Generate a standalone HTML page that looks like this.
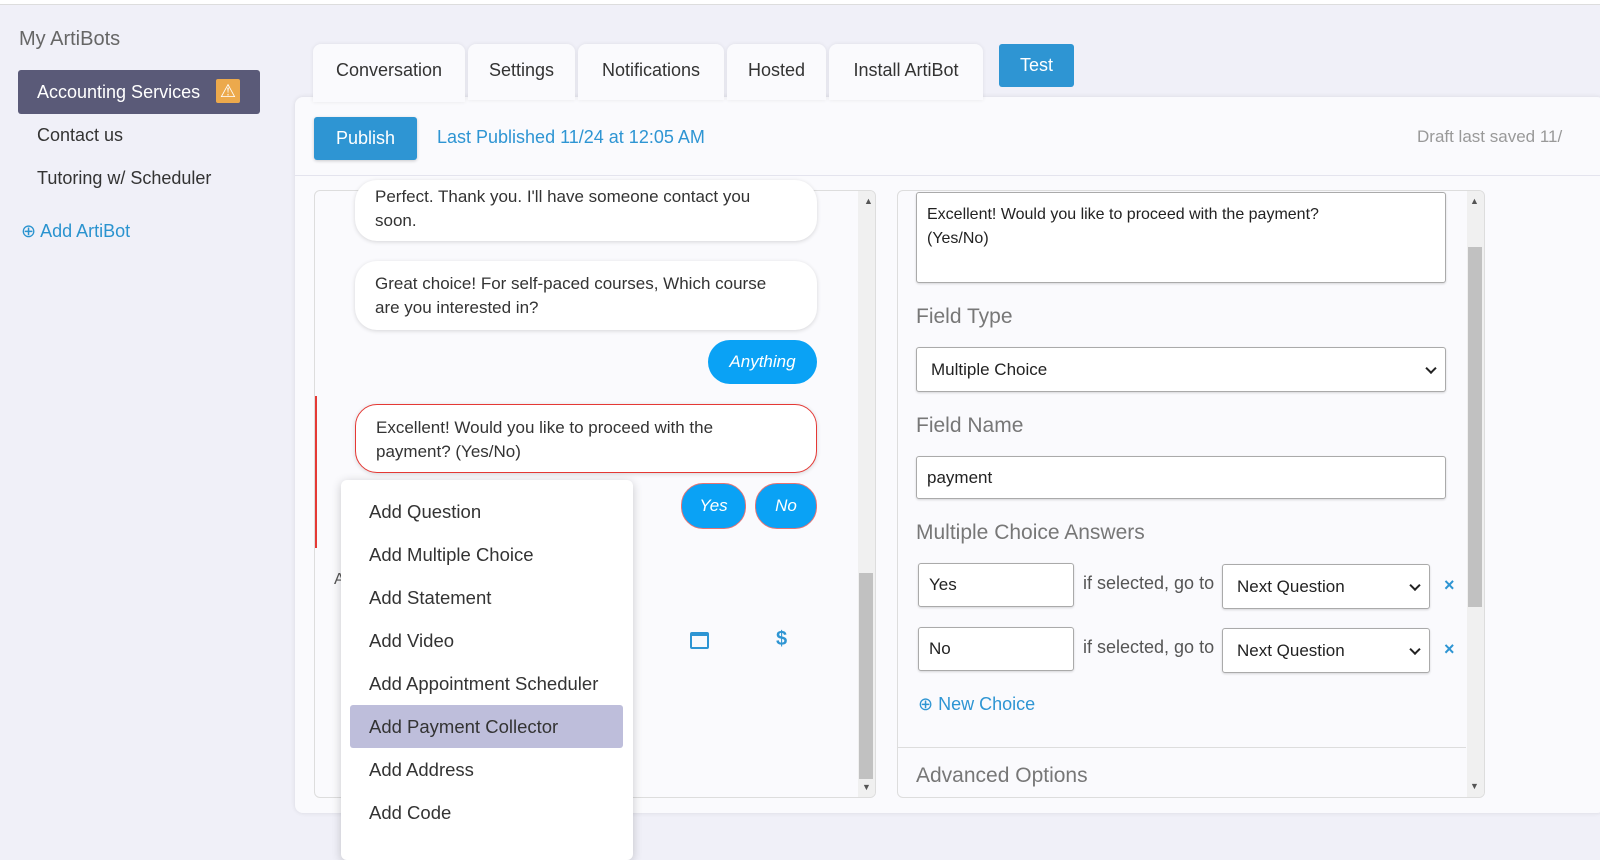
<!DOCTYPE html>
<html><head><meta charset="utf-8"><style>
*{box-sizing:border-box;margin:0;padding:0}
body{width:1600px;height:845px;overflow:hidden;background:#f0f0f8;font-family:"Liberation Sans",sans-serif;color:#333;position:relative;font-size:16px}
.a{position:absolute}
.tab{position:absolute;top:44px;height:56px;background:#fafafd;border-radius:8px 8px 0 0;box-shadow:0 0 4px rgba(0,0,0,.08);font-size:18px;color:#333;text-align:center;line-height:52px;white-space:nowrap}
.bub{position:absolute;background:#fff;border-radius:22px;box-shadow:0 1px 4px rgba(0,0,0,.15);font-size:17px;line-height:24px;color:#333;padding:0 37px 0 20px}
.pill{position:absolute;background:#0aa2f5;color:#fff;font-style:italic;font-size:17px;border-radius:22px;text-align:center;line-height:44px}
.inp{position:absolute;background:#fff;border:1px solid #aaa;border-radius:3px;box-shadow:0 1px 2px rgba(0,0,0,.15);font-size:17px;color:#222;padding-left:12px}
.lbl{position:absolute;font-size:21px;color:#777}
.mi{position:absolute;left:369px;font-size:18.5px;color:#333}
.chev{position:absolute;right:10px;top:50%;width:8px;height:8px;border-right:2px solid #222;border-bottom:2px solid #222;transform:translateY(-70%) rotate(45deg)}
</style></head><body>
<div class="a" style="left:0;top:0;width:1600px;height:5px;background:#fff;border-bottom:1px solid #ddd"></div>
<div class="a" style="left:19px;top:28px;font-size:20px;color:#666">My ArtiBots</div>
<div class="a" style="left:18px;top:70px;width:242px;height:44px;background:#5a5a78;border-radius:3px;color:#fff;font-size:18px;line-height:44px;padding-left:19px">Accounting Services
<span class="a" style="left:198px;top:9px;width:24px;height:24px;background:#eca94c;border-radius:2px;color:#fff;text-align:center;line-height:24px;font-size:18px">⚠</span></div>
<div class="a" style="left:37px;top:125px;font-size:18px">Contact us</div>
<div class="a" style="left:37px;top:168px;font-size:18px">Tutoring w/ Scheduler</div>
<div class="a" style="left:21px;top:221px;font-size:18px;color:#2a93cf">⊕ Add ArtiBot</div>

<div class="a" style="left:295px;top:97px;width:1310px;height:716px;background:#fafafd;border-radius:8px;box-shadow:0 0 5px rgba(0,0,0,.1)"></div>
<div class="tab" style="left:313px;width:152px;height:58px">Conversation</div>
<div class="tab" style="left:468px;width:107px">Settings</div>
<div class="tab" style="left:578px;width:146px">Notifications</div>
<div class="tab" style="left:727px;width:99px">Hosted</div>
<div class="tab" style="left:829px;width:154px">Install ArtiBot</div>
<div class="a" style="left:999px;top:44px;width:75px;height:43px;background:#2e95d3;border-radius:3px;color:#fff;font-size:18px;text-align:center;line-height:43px">Test</div>

<div class="a" style="left:314px;top:117px;width:103px;height:43px;background:#2e95d3;border-radius:3px;color:#fff;font-size:18px;text-align:center;line-height:43px;box-shadow:0 1px 3px rgba(0,0,0,.2)">Publish</div>
<div class="a" style="left:437px;top:127px;font-size:18px;color:#2e95d3">Last Published 11/24 at 12:05 AM</div>
<div class="a" style="left:1417px;top:127px;font-size:17px;color:#999;white-space:nowrap">Draft last saved 11/</div>
<div class="a" style="left:295px;top:175px;width:1305px;height:1px;background:#e4e4ee"></div>

<!-- left panel -->
<div class="a" style="left:314px;top:190px;width:562px;height:608px;background:#fafafd;border:1px solid #ddd;border-radius:6px;overflow:hidden">
 <div class="a" style="right:0;top:0;width:17px;height:608px;background:#f0f0f0"></div>
 <div class="a" style="right:2px;top:382px;width:14px;height:206px;background:#c1c1c1"></div>
 <div class="a" style="left:0;top:205px;width:2px;height:152px;background:#e53935"></div>
</div>
<div class="bub" style="left:355px;top:180px;width:462px;height:61px;padding-top:5px">Perfect. Thank you. I'll have someone contact you soon.</div>
<div class="bub" style="left:355px;top:261px;width:462px;height:69px;padding-top:11px">Great choice! For self-paced courses, Which course are you interested in?</div>
<div class="pill" style="left:708px;top:340px;width:109px">Anything</div>
<div class="bub" style="left:355px;top:404px;width:462px;height:69px;padding-top:11px;border:1.5px solid #e53935">Excellent! Would you like to proceed with the payment? (Yes/No)</div>
<div class="pill" style="left:681px;top:483px;width:65px;border:1.5px solid #e57373">Yes</div>
<div class="pill" style="left:755px;top:483px;width:62px;border:1.5px solid #e57373">No</div>
<div class="a" style="left:690px;top:632px;width:19px;height:17px;border:2px solid #2e95d3;border-top-width:4px;border-radius:2px"></div>
<div class="a" style="left:776px;top:628px;font-size:20px;font-weight:bold;color:#2e95d3">$</div>
<div class="a" style="left:334px;top:571px;font-size:16px;color:#555">A</div>
<div class="a" style="left:864px;top:196px;font-size:9px;color:#555">▲</div>
<div class="a" style="left:862px;top:782px;font-size:9px;color:#555">▼</div>

<!-- dropdown -->
<div class="a" style="left:341px;top:480px;width:292px;height:380px;background:#fff;border-radius:6px;box-shadow:0 2px 10px rgba(0,0,0,.2)"></div>
<div class="a" style="left:350px;top:705px;width:273px;height:43px;background:#bebedb;border-radius:3px"></div>
<div class="mi" style="top:501px">Add Question</div>
<div class="mi" style="top:544px">Add Multiple Choice</div>
<div class="mi" style="top:587px">Add Statement</div>
<div class="mi" style="top:630px">Add Video</div>
<div class="mi" style="top:673px">Add Appointment Scheduler</div>
<div class="mi" style="top:716px">Add Payment Collector</div>
<div class="mi" style="top:759px">Add Address</div>
<div class="mi" style="top:802px">Add Code</div>

<!-- right panel -->
<div class="a" style="left:897px;top:190px;width:588px;height:608px;background:#fafafd;border:1px solid #ddd;border-radius:6px;overflow:hidden">
 <div class="a" style="right:0;top:0;width:17px;height:608px;background:#f0f0f0"></div>
 <div class="a" style="right:2px;top:56px;width:14px;height:360px;background:#c1c1c1"></div>
 <div class="a" style="left:0;top:556px;width:568px;height:1px;background:#ddd"></div>
</div>
<div class="a" style="left:1470px;top:196px;font-size:9px;color:#555">▲</div>
<div class="a" style="left:1470px;top:781px;font-size:9px;color:#555">▼</div>
<div class="inp" style="left:916px;top:192px;width:530px;height:91px;padding:10px 60px 0 10px;font-size:16px;line-height:24px">Excellent! Would you like to proceed with the payment? (Yes/No)</div>
<div class="lbl" style="left:916px;top:305px">Field Type</div>
<div class="inp" style="left:916px;top:347px;width:530px;height:45px;line-height:43px;padding-left:14px">Multiple Choice<span class="chev"></span></div>
<div class="lbl" style="left:916px;top:414px">Field Name</div>
<div class="inp" style="left:916px;top:456px;width:530px;height:43px;line-height:41px;padding-left:10px">payment</div>
<div class="lbl" style="left:916px;top:521px">Multiple Choice Answers</div>
<div class="inp" style="left:918px;top:563px;width:156px;height:44px;line-height:42px;padding-left:10px">Yes</div>
<div class="a" style="left:1083px;top:573px;font-size:18px;color:#555">if selected, go to</div>
<div class="inp" style="left:1222px;top:564px;width:208px;height:45px;line-height:43px;padding-left:14px">Next Question<span class="chev"></span></div>
<div class="a" style="left:1444px;top:575px;font-size:18px;color:#2e95d3;font-weight:bold">×</div>
<div class="inp" style="left:918px;top:627px;width:156px;height:44px;line-height:42px;padding-left:10px">No</div>
<div class="a" style="left:1083px;top:637px;font-size:18px;color:#555">if selected, go to</div>
<div class="inp" style="left:1222px;top:628px;width:208px;height:45px;line-height:43px;padding-left:14px">Next Question<span class="chev"></span></div>
<div class="a" style="left:1444px;top:639px;font-size:18px;color:#2e95d3;font-weight:bold">×</div>
<div class="a" style="left:918px;top:694px;font-size:18px;color:#2e95d3">⊕ New Choice</div>
<div class="lbl" style="left:916px;top:764px">Advanced Options</div>
</body></html>
